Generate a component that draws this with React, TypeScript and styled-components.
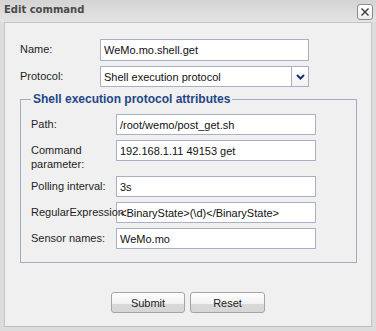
import React from 'react';
import styled, { createGlobalStyle } from 'styled-components';

const GlobalStyle = createGlobalStyle`
  html, body {
    margin: 0;
    padding: 0;
    background: #dcdcdc;
  }
  * {
    box-sizing: border-box;
  }
`;

const Dialog = styled.div`
  width: 376px;
  height: 331px;
  display: flex;
  flex-direction: column;
  background: linear-gradient(#d4d4d4 0, #e4e4e4 22px, #dcdcdc 22px, #dcdcdc 100%);
  padding: 0 4px 4px 4px;
  font-family: 'Liberation Sans', Arial, sans-serif;
`;

const TitleBar = styled.div`
  height: 22px;
  display: flex;
  align-items: center;
  justify-content: space-between;
`;

const Title = styled.div`
  font-family: 'DejaVu Sans', Verdana, sans-serif;
  font-weight: bold;
  font-size: 10px;
  color: #4a4a4a;
  margin-top: -3px;
`;

const CloseButton = styled.button`
  width: 16px;
  height: 16px;
  padding: 0;
  border: 1px solid #8c8c8c;
  border-radius: 3px;
  background: linear-gradient(#ffffff, #ececec);
  display: flex;
  align-items: center;
  justify-content: center;
  margin-top: 1px;
  margin-right: -1px;
`;

const Panel = styled.div`
  flex: 1;
  background: #f0f0f0;
  border: 1px solid #c4c4c4;
  border-bottom-color: #bdbdbd;
  padding: 16px 0 0 15px;
  display: flex;
  flex-direction: column;
`;

const Row = styled.div<{ $labelWidth: number; $last?: boolean }>`
  display: grid;
  grid-template-columns: ${p => p.$labelWidth}px 1fr;
  align-items: start;
  margin-bottom: ${p => (p.$last ? 0 : 5)}px;
`;

const Label = styled.label`
  font-size: 11px;
  line-height: 13.5px;
  color: #1e1e1e;
  padding-top: 4px;
  white-space: nowrap;
  position: relative;
  z-index: 1;
`;

const TextInput = styled.div<{ $width: number; $height?: number }>`
  width: ${p => p.$width}px;
  height: ${p => p.$height ?? 21}px;
  background: #ffffff;
  border: 1px solid #a9afc6;
  padding-left: 3px;
  font-size: 11px;
  color: #111;
  display: flex;
  align-items: center;
  white-space: nowrap;
  overflow: hidden;
`;

const SelectBox = styled.div`
  width: 209px;
  height: 21px;
  background: #ffffff;
  border: 1px solid #a9afc6;
  display: flex;
  align-items: stretch;
  font-size: 11px;
  color: #111;
`;

const SelectText = styled.div`
  flex: 1;
  padding-left: 3px;
  display: flex;
  align-items: center;
`;

const SelectArrow = styled.div`
  width: 17px;
  border-left: 1px solid #a9afc6;
  background: linear-gradient(#ffffff, #f2f2f2);
  display: flex;
  align-items: center;
  justify-content: center;
`;

const Fieldset = styled.fieldset`
  width: 337px;
  margin: 0;
  padding: 8px 10px 13px 10px;
  border: 1px solid #a6a9c0;
`;

const Legend = styled.legend`
  font-size: 12px;
  font-weight: bold;
  color: #244786;
  padding: 0 2px;
  line-height: 14px;
`;

const Buttons = styled.div`
  display: flex;
  justify-content: center;
  gap: 5px;
  margin-top: 29px;
  padding-right: 15px;
`;

const Button = styled.button<{ $width: number }>`
  width: ${p => p.$width}px;
  height: 21px;
  border: 1px solid #a4a4a4;
  border-radius: 3px;
  background: linear-gradient(#fdfdfd 0, #f3f3f3 55%, #d9d9d9 60%, #d6d6d6 100%);
  font-family: 'Liberation Sans', Arial, sans-serif;
  font-size: 11px;
  color: #222;
  padding: 0;
  box-shadow: inset 0 1px 0 #fff;
`;

type Field = { label: React.ReactNode; value: string };

const attributes: Field[] = [
  { label: 'Path:', value: '/root/wemo/post_get.sh' },
  {
    label: (
      <>
        Command
        <br />
        parameter:
      </>
    ),
    value: '192.168.1.11 49153 get',
  },
  { label: 'Polling interval:', value: '3s' },
  { label: 'RegularExpression:', value: '<BinaryState>(\\d)</BinaryState>' },
  { label: 'Sensor names:', value: 'WeMo.mo' },
];

export default function App() {
  return (
    <>
      <GlobalStyle />
      <Dialog>
        <TitleBar>
          <Title>Edit command</Title>
          <CloseButton aria-label="close">
            <svg width="10" height="10" viewBox="0 0 10 10">
              <path d="M1.5 1.5 L8.5 8.5 M8.5 1.5 L1.5 8.5" stroke="#333" strokeWidth="1.3" />
            </svg>
          </CloseButton>
        </TitleBar>
        <Panel>
          <Row $labelWidth={80}>
            <Label>Name:</Label>
            <TextInput $width={209} $height={22}>WeMo.mo.shell.get</TextInput>
          </Row>
          <Row $labelWidth={80}>
            <Label>Protocol:</Label>
            <SelectBox>
              <SelectText>Shell execution protocol</SelectText>
              <SelectArrow>
                <svg width="9" height="6" viewBox="0 0 9 6">
                  <path d="M1 1 L4.5 4.5 L8 1" stroke="#1d2f6b" strokeWidth="2" fill="none" />
                </svg>
              </SelectArrow>
            </SelectBox>
          </Row>
          <Fieldset>
            <Legend>Shell execution protocol attributes</Legend>
            {attributes.map((f, i) => (
              <Row key={i} $labelWidth={85} $last={i === attributes.length - 1}>
                <Label>{f.label}</Label>
                <TextInput $width={200}>{f.value}</TextInput>
              </Row>
            ))}
          </Fieldset>
          <Buttons>
            <Button $width={74}>Submit</Button>
            <Button $width={75}>Reset</Button>
          </Buttons>
        </Panel>
      </Dialog>
    </>
  );
}
